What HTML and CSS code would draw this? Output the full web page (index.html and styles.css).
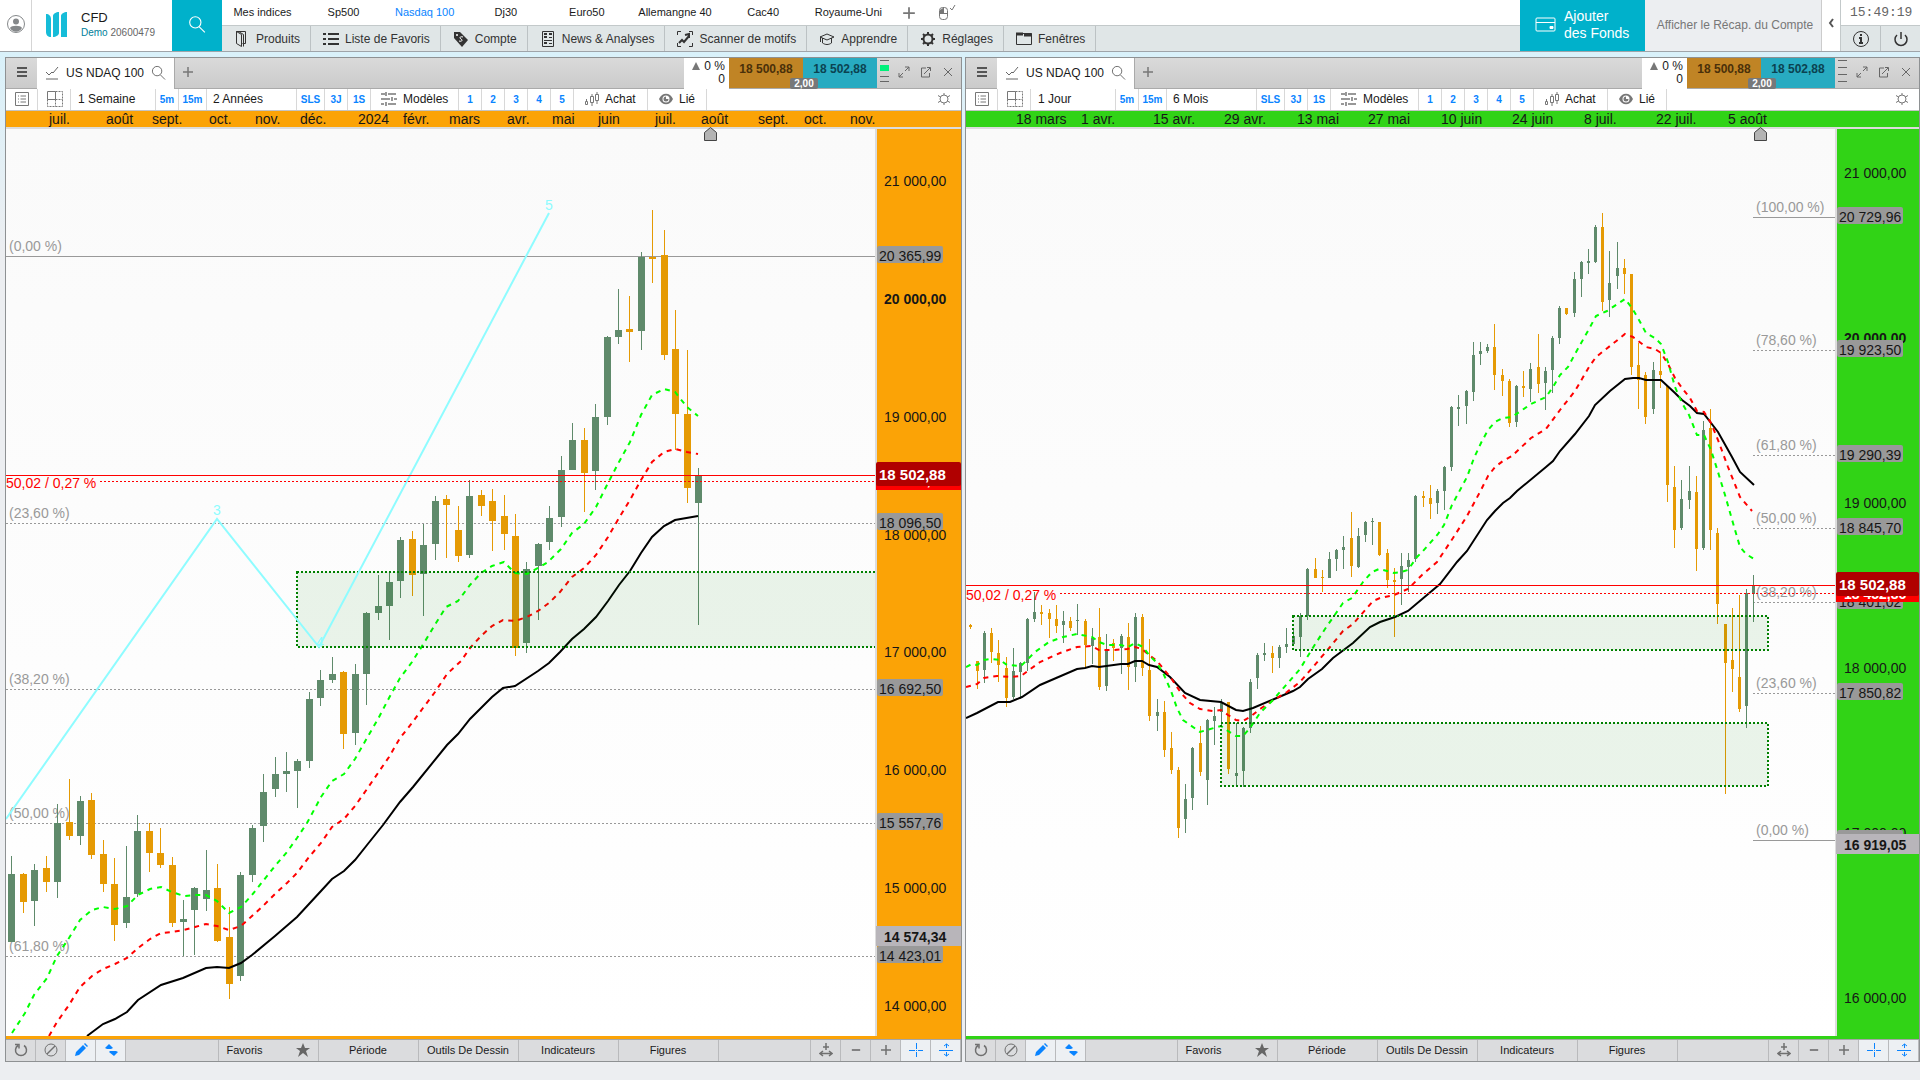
FILE: index.html
```html
<!DOCTYPE html>
<html lang="fr">
<head>
    <meta charset="UTF-8">
    <meta name="viewport" content="width=device-width, initial-scale=1.0">
    <title>CFD - US NDAQ 100</title>
    <link rel="stylesheet" href="styles.css">
</head>
<body>

<!-- icons -->
<svg class="sprite" aria-hidden="true">
    <symbol id="i-search" viewBox="0 0 16 16"><circle cx="6.500" cy="6.500" r="5"/><path d="M10 10.500L15 15.500"/></symbol>
    <symbol id="i-line" viewBox="0 0 14 14"><path d="M1 6l3 3 3-3 1 1 5-6M1 13h12"/></symbol>
    <symbol id="i-list" viewBox="0 0 14 14"><path d="M.5.500h13v13H.5zM3 4h1M3 7h1M3 10h1M5.500 4H11M5.500 7H11M5.500 10H11"/></symbol>
    <symbol id="i-grid" viewBox="0 0 16 16"><path d="M.5.500h8v8h-8z"/><path stroke-dasharray="2 1" d="M8.500.500h7v15H.5v-7M8.500 8.500h7M8.500 8.500v7"/></symbol>
    <symbol id="i-sliders" viewBox="0 0 16 14"><path stroke-width="1.500" d="M0 2h4M7 2h8M0 7h9M13 7h3M0 12h3M7 12h8M5 0v4M11 5v4M5 10v4"/></symbol>
    <symbol id="i-candles" viewBox="0 0 15 14"><path d="M1.500 9.500h2v3h-2zM2.500 7v2M6.500 4.500h3v6h-3zM8 2v2M8 11v3M11.500 2.500h3v6h-3zM13 0v2M13 9v3"/></symbol>
    <symbol id="i-eye" viewBox="0 0 14 12"><path fill="currentColor" stroke="none" d="M0 6c3-7 11-7 14 0-3 7-11 7-14 0z"/><circle cx="7" cy="6" r="3.500" fill="#fff" stroke="none"/><path fill="currentColor" stroke="none" d="M7 3.500v2.500h2.500a2.500 2.500 0 1 1-2.500-2.500z"/></symbol>
    <symbol id="i-cog" viewBox="0 0 14 14"><circle cx="7" cy="7" r="4"/><path d="M7 3V1M7 11v2M3.500 5L1 3.500M3.500 9L1 10.500M10.500 5L13 3.500M10.500 9L13 10.500"/></symbol>
    <symbol id="i-expand" viewBox="0 0 12 12"><path d="M7 5l4-4M7 1h4v4M5 7l-4 4M1 7v4h4"/></symbol>
    <symbol id="i-popout" viewBox="0 0 12 12"><path d="M6 2H1.500v9h8V7M4 8l6-6M7 1.500h3.500V5"/></symbol>
    <symbol id="i-close" viewBox="0 0 12 12"><path d="M2 2l8 8M10 2l-8 8"/></symbol>
    <symbol id="i-plus" viewBox="0 0 12 12"><path stroke-width="1.500" d="M6 1v10M1 6h10"/></symbol>
    <symbol id="i-minus" viewBox="0 0 12 12"><path stroke-width="2" d="M1 6h10"/></symbol>
    <symbol id="i-menu" viewBox="0 0 12 12"><path stroke-width="2" d="M1 2h10M1 6h10M1 10h10"/></symbol>
    <symbol id="i-undo" viewBox="0 0 14 14"><path stroke-width="1.500" d="M4 2.500a5.500 5.500 0 1 0 6 0M1 1.500h4v4"/></symbol>
    <symbol id="i-none" viewBox="0 0 14 14"><circle cx="7" cy="7" r="6"/><path stroke-width="1.500" d="M3 11l8-8"/></symbol>
    <symbol id="i-pen" viewBox="0 0 14 14"><path fill="currentColor" stroke="none" d="M1 13l1-4 7-7 3 3-7 7zM10 1l1-1 3 3-1 1z"/></symbol>
    <symbol id="i-updown" viewBox="0 0 14 14"><path fill="currentColor" stroke="none" d="M1 5l4-4 4 4-2 1H3zM5 9l1-1h6l2 1-4 4z"/></symbol>
    <symbol id="i-star" viewBox="0 0 14 14"><path fill="currentColor" stroke="none" d="M7 0l2 5h5l-4 3 2 6-5-4-5 4 2-6-4-3h5z"/></symbol>
    <symbol id="i-fit" viewBox="0 0 14 14"><path stroke-width="1.500" d="M7 0v7M4 4h6M2 10.500h10M4 8l-3 2.500L4 13M10 8l3 2.500-3 2.500"/></symbol>
    <symbol id="i-cross" viewBox="0 0 14 14"><path d="M7.500 0v6M7.500 9v5M0 7.500h6M9 7.500h5M7 7.500h1"/></symbol>
    <symbol id="i-split" viewBox="0 0 14 14"><path d="M0 7.500h14M7.500 5V1M5 3l2.500-2L10 3M7.500 9v4M5 11l2.500 2 2.500-2"/></symbol>
</svg>

<!-- header -->
<header class="header">
    <button class="avatar" aria-label="Profil">
        <svg width="20" height="20" viewBox="0 0 20 20"><circle cx="10" cy="10" r="8.500"/><path fill="currentColor" stroke="none" d="M10 4.500a3 3 0 0 1 0 6 3 3 0 0 1 0-6zM4 14c1-3 11-3 12 0-3 5-9 5-12 0z"/></svg>
    </button>
    <div class="account">
        <svg class="brand" width="22" height="26" viewBox="0 0 22 26"><path d="M0 2c3 0 5 2 5 5v18c-3 0-5-2-5-5zM7 4c0-2 3-4 6-4v21c0 2-3 4-6 4zM15 4c0-2 3-4 6-4v25h-6z"/></svg>
        <div>
            <div class="account-name">CFD</div>
            <div class="account-id"><span>Demo</span> 20600479</div>
        </div>
    </div>
    <button class="search" aria-label="Rechercher"><svg width="18" height="18"><use href="#i-search"/></svg></button>

    <div class="nav">
        <nav class="tabs">
            <a href="#">Mes indices</a>
            <a href="#">Sp500</a>
            <a href="#" class="active">Nasdaq 100</a>
            <a href="#">Dj30</a>
            <a href="#">Euro50</a>
            <a href="#">Allemangne 40</a>
            <a href="#">Cac40</a>
            <a href="#">Royaume-Uni</a>
            <button aria-label="Ajouter un onglet"><svg width="14" height="14"><use href="#i-plus"/></svg></button>
            <button aria-label="Souris"><svg width="18" height="16" viewBox="0 0 18 16"><rect x="1.500" y="2.500" width="8" height="12" rx="3"/><path d="M1.500 8.500h8M5.500 3v5M12 3l2 2 3-5"/><path fill="currentColor" stroke="none" d="M2 5l3-2v5H2z"/></svg></button>
        </nav>
        <nav class="menu">
            <button><svg width="18" height="16" viewBox="0 0 18 16"><path d="M3.500 12V.5h9v12h-3M3.500.500l5 3v12l-5-3zM5.500.500l5 3v12"/></svg>Produits</button>
            <button><svg width="18" height="16" viewBox="0 0 18 16"><path stroke-width="2" d="M1 3h3M6 3h11M1 8h3M6 8h11M1 13h3M6 13h11"/></svg>Liste de Favoris</button>
            <button><svg width="18" height="16" viewBox="0 0 18 16"><path fill="currentColor" stroke="none" d="M2 1h6l8 8-6 7-8-9z"/><circle cx="5" cy="4" r="1" fill="#fff" stroke="none"/><path stroke="#fff" d="M11 6c-3-1-4 1-2 2s1 3-2 2"/></svg>Compte</button>
            <button><svg width="18" height="16" viewBox="0 0 18 16"><path d="M3.500.500h11v15h-11z"/><path stroke-width="2" d="M5 3h3M5 6h3M10 3h3M5 12h3"/><path d="M10 6.500h3M5 9.500h8M10 12.500h3"/></svg>News &amp; Analyses</button>
            <button><svg width="18" height="16" viewBox="0 0 18 16"><path d="M1.500 4V.5H5M13 .5h3.500V4M1.500 12v3.500H5M13 15.500h3.500V12"/><path stroke-width="2" d="M3 12l3-3 2 2 5-6M9 4l4-1v4"/></svg>Scanner de motifs</button>
            <button><svg width="18" height="16" viewBox="0 0 18 16"><path d="M2 6l7-3 7 3-7 3zM4.500 7v5c3 2 6 2 9 0V7M2.500 6v5"/></svg>Apprendre</button>
            <button><svg width="18" height="16" viewBox="0 0 18 16"><circle cx="9" cy="8" r="4.500" stroke-width="2"/><path stroke-width="2" d="M9 1v2M9 13v2M2 8h2M14 8h2M4 3l2 2M12 11l2 2M14 3l-2 2M6 11l-2 2"/></svg>Réglages</button>
            <button><svg width="18" height="16" viewBox="0 0 18 16"><path d="M1.500 2.500h15v11h-15z"/><path stroke-width="3" d="M1 3h7M9 4h8"/></svg>Fenêtres</button>
        </nav>
    </div>

    <button class="funds">
        <svg width="22" height="16" viewBox="0 0 22 16"><rect x="1" y="1" width="19" height="13" rx="1"/><path d="M1 5.500h19"/><path fill="currentColor" d="M15 9.500h3v2h-3z"/></svg>
        <span>Ajouter<br>des Fonds</span>
    </button>
    <button class="recap">Afficher le Récap. du Compte</button>
    <button class="collapse" aria-label="Replier"><svg width="6" height="10" viewBox="0 0 6 10"><path stroke-width="2" d="M5 1L2 5l3 4"/></svg></button>
    <div class="status">
        <time>15:49:19</time>
        <div class="status-buttons">
            <button aria-label="Informations"><svg width="18" height="18" viewBox="0 0 18 18"><circle cx="9" cy="9" r="7.500"/><path stroke-width="2" d="M9 4v2M7 8h2v5M7 13h4"/></svg></button>
            <button aria-label="Quitter"><svg width="16" height="18" viewBox="0 0 16 18"><path stroke-width="1.500" d="M4 5a6 6 0 1 0 8 0M8 2v7"/></svg></button>
        </div>
    </div>
</header>

<main class="panels">
    <!-- weekly chart -->
    <section class="panel">
        <div class="title-bar">
            <button class="burger" aria-label="Menu"><svg width="12" height="12"><use href="#i-menu"/></svg></button>
            <div class="tab"><svg width="14" height="14"><use href="#i-line"/></svg>US NDAQ 100<svg width="15" height="15"><use href="#i-search"/></svg></div>
            <button class="add-tab" aria-label="Nouveau graphique"><svg width="12" height="12"><use href="#i-plus"/></svg></button>
            <div class="change"><span><i></i>0 %</span><span>0</span></div>
            <div class="quotes">
                <button class="sell">18 500,88</button>
                <button class="buy">18 502,88</button>
                <span class="spread">2,00</span>
            </div>
            <div class="meter on"><i></i><i></i><i></i><i></i></div>
            <div class="window-buttons">
                <button aria-label="Agrandir"><svg width="12" height="12"><use href="#i-expand"/></svg></button>
                <button aria-label="Détacher"><svg width="12" height="12"><use href="#i-popout"/></svg></button>
                <button aria-label="Fermer"><svg width="12" height="12"><use href="#i-close"/></svg></button>
            </div>
        </div>
        <div class="tools">
            <button class="w-list" aria-label="Liste"><svg width="14" height="14"><use href="#i-list"/></svg></button>
            <button class="w-grid" aria-label="Disposition"><svg width="16" height="16"><use href="#i-grid"/></svg></button>
            <button class="w-unit">1 Semaine</button>
            <button class="w-short quick">5m</button>
            <button class="w-mid quick">15m</button>
            <button class="w-range">2 Années</button>
            <button class="w-mid quick">SLS</button>
            <button class="w-short quick">3J</button>
            <button class="w-short quick">1S</button>
            <button class="w-model"><svg width="16" height="14"><use href="#i-sliders"/></svg>Modèles</button>
            <button class="w-short quick">1</button>
            <button class="w-short quick">2</button>
            <button class="w-short quick">3</button>
            <button class="w-short quick">4</button>
            <button class="w-short quick">5</button>
            <button class="w-buy"><svg width="15" height="14"><use href="#i-candles"/></svg>Achat</button>
            <button class="w-link"><svg width="14" height="12"><use href="#i-eye"/></svg>Lié</button>
            <button class="cog" aria-label="Réglages du graphique"><svg width="14" height="14"><use href="#i-cog"/></svg></button>
        </div>
        <svg class="chart" id="weekly" viewBox="6 111 955 928"></svg>
        <div class="bottom-bar">
            <button class="ic" aria-label="Rétablir"><svg width="14" height="14"><use href="#i-undo"/></svg></button>
            <button class="ic" aria-label="Aucun"><svg width="14" height="14"><use href="#i-none"/></svg></button>
            <button class="ic on" aria-label="Dessiner"><svg width="14" height="14"><use href="#i-pen"/></svg></button>
            <button class="ic on" aria-label="Ordre"><svg width="14" height="14"><use href="#i-updown"/></svg></button>
            <span class="space"></span>
            <button class="wide fav">Favoris<svg width="14" height="14"><use href="#i-star"/></svg></button>
            <button class="wide">Période</button>
            <button class="wide">Outils De Dessin</button>
            <button class="wide">Indicateurs</button>
            <button class="wide">Figures</button>
            <span class="space"></span>
            <button class="ic" aria-label="Ajuster"><svg width="14" height="14"><use href="#i-fit"/></svg></button>
            <button class="ic" aria-label="Zoom arrière"><svg width="10" height="10"><use href="#i-minus"/></svg></button>
            <button class="ic" aria-label="Zoom avant"><svg width="12" height="12"><use href="#i-plus"/></svg></button>
            <button class="ic on" aria-label="Réticule"><svg width="14" height="14"><use href="#i-cross"/></svg></button>
            <button class="ic on" aria-label="Échelle"><svg width="14" height="14"><use href="#i-split"/></svg></button>
        </div>
    </section>

    <!-- daily chart -->
    <section class="panel">
        <div class="title-bar">
            <button class="burger" aria-label="Menu"><svg width="12" height="12"><use href="#i-menu"/></svg></button>
            <div class="tab"><svg width="14" height="14"><use href="#i-line"/></svg>US NDAQ 100<svg width="15" height="15"><use href="#i-search"/></svg></div>
            <button class="add-tab" aria-label="Nouveau graphique"><svg width="12" height="12"><use href="#i-plus"/></svg></button>
            <div class="change"><span><i></i>0 %</span><span>0</span></div>
            <div class="quotes">
                <button class="sell">18 500,88</button>
                <button class="buy">18 502,88</button>
                <span class="spread">2,00</span>
            </div>
            <div class="meter"><i></i><i></i><i></i><i></i></div>
            <div class="window-buttons">
                <button aria-label="Agrandir"><svg width="12" height="12"><use href="#i-expand"/></svg></button>
                <button aria-label="Détacher"><svg width="12" height="12"><use href="#i-popout"/></svg></button>
                <button aria-label="Fermer"><svg width="12" height="12"><use href="#i-close"/></svg></button>
            </div>
        </div>
        <div class="tools">
            <button class="w-list" aria-label="Liste"><svg width="14" height="14"><use href="#i-list"/></svg></button>
            <button class="w-grid" aria-label="Disposition"><svg width="16" height="16"><use href="#i-grid"/></svg></button>
            <button class="w-unit">1 Jour</button>
            <button class="w-short quick">5m</button>
            <button class="w-mid quick">15m</button>
            <button class="w-range">6 Mois</button>
            <button class="w-mid quick">SLS</button>
            <button class="w-short quick">3J</button>
            <button class="w-short quick">1S</button>
            <button class="w-model"><svg width="16" height="14"><use href="#i-sliders"/></svg>Modèles</button>
            <button class="w-short quick">1</button>
            <button class="w-short quick">2</button>
            <button class="w-short quick">3</button>
            <button class="w-short quick">4</button>
            <button class="w-short quick">5</button>
            <button class="w-buy"><svg width="15" height="14"><use href="#i-candles"/></svg>Achat</button>
            <button class="w-link"><svg width="14" height="12"><use href="#i-eye"/></svg>Lié</button>
            <button class="cog" aria-label="Réglages du graphique"><svg width="14" height="14"><use href="#i-cog"/></svg></button>
        </div>
        <svg class="chart" id="daily" viewBox="966 111 953 928"></svg>
        <div class="bottom-bar">
            <button class="ic" aria-label="Rétablir"><svg width="14" height="14"><use href="#i-undo"/></svg></button>
            <button class="ic" aria-label="Aucun"><svg width="14" height="14"><use href="#i-none"/></svg></button>
            <button class="ic on" aria-label="Dessiner"><svg width="14" height="14"><use href="#i-pen"/></svg></button>
            <button class="ic on" aria-label="Ordre"><svg width="14" height="14"><use href="#i-updown"/></svg></button>
            <span class="space"></span>
            <button class="wide fav">Favoris<svg width="14" height="14"><use href="#i-star"/></svg></button>
            <button class="wide">Période</button>
            <button class="wide">Outils De Dessin</button>
            <button class="wide">Indicateurs</button>
            <button class="wide">Figures</button>
            <span class="space"></span>
            <button class="ic" aria-label="Ajuster"><svg width="14" height="14"><use href="#i-fit"/></svg></button>
            <button class="ic" aria-label="Zoom arrière"><svg width="10" height="10"><use href="#i-minus"/></svg></button>
            <button class="ic" aria-label="Zoom avant"><svg width="12" height="12"><use href="#i-plus"/></svg></button>
            <button class="ic on" aria-label="Réticule"><svg width="14" height="14"><use href="#i-cross"/></svg></button>
            <button class="ic on" aria-label="Échelle"><svg width="14" height="14"><use href="#i-split"/></svg></button>
        </div>
    </section>
</main>

<script src="script.js"></script>
</body>
</html>
```

FILE: styles.css
```css
*{
    box-sizing: border-box;
    margin:0;
    padding:0;
}
body{
    display: flex;
    flex-direction: column;
    height: 100vh;
    overflow: hidden;
    font-family: "Liberation Sans", Arial, sans-serif;
    font-size: 12px;
    color: #1a1a1a;
    background: #eceef1;
}
button{
    border: 0;
    background: none;
    font: inherit;
    color: inherit;
    white-space: nowrap;
}
a{
    color: inherit;
    text-decoration: none;
}
svg{
    flex: none;
    fill: none;
    stroke: currentColor;
}
.sprite{
    position: absolute;
    width: 0;
    height: 0;
}

/* header */
.header{
    display: flex;
    height: 52px;
    background: #fff;
    border-bottom: 1px solid #9fa4a9;
}
.avatar{
    width: 32px;
    border-right: 1px solid #d5d5d5;
    color: #85888a;
    padding: 0 0 4px 6px;
    display: flex;
    align-items: center;
}
.account{
    display: flex;
    align-items: center;
    width: 140px;
    padding: 0 0 2px 14px;
    gap: 13px;
}
.brand{
    fill: #16bcd8;
    stroke: none;
}
.account-name{
    font-size: 13px;
    line-height: 16px;
}
.account-id{
    font-size: 10px;
    line-height: 14px;
    color: #666;
}
.account-id span{
    color: #00809a;
}
.search{
    display: flex;
    align-items: center;
    justify-content: center;
    width: 50px;
    background: #00b1cb;
    color: #fff;
    padding-bottom: 4px;
}
.nav{
    flex: 1;
    display: flex;
    flex-direction: column;
    min-width: 0;
}
.tabs{
    display: flex;
    height: 25px;
    font-size: 11px;
    line-height: 24px;
}
.tabs a{
    min-width: 81px;
    padding: 0 11px;
    text-align: center;
    white-space: nowrap;
}
.tabs a.active{
    color: #0a84ff;
}
.tabs button{
    display: flex;
    align-items: center;
    width: 36px;
    padding-left: 9px;
    color: #777;
}
.menu{
    flex: 1;
    display: flex;
    background: #e0e6e7;
    border-top: 1px solid #c3c9ca;
}
.menu button{
    display: flex;
    align-items: center;
    gap: 5px;
    padding: 0 10px 0 11px;
    border-right: 1px solid #bcc2c4;
    color: #333;
}
.funds{
    display: flex;
    align-items: center;
    gap: 7px;
    width: 125px;
    padding: 0 0 2px 15px;
    background: #00b1cb;
    color: #fff;
    font-size: 14px;
    line-height: 17px;
    text-align: left;
}
.recap{
    width: 177px;
    padding: 0 0 2px 4px;
    background: #eceef1;
    color: #777;
    border-right: 1px solid #ccc;
}
.collapse{
    width: 19px;
    color: #555;
    border-right: 1px solid #c3c9ca;
    padding-bottom: 4px;
}
.status{
    width: 79px;
    display: flex;
    flex-direction: column;
}
.status time{
    height: 25px;
    padding-left: 9px;
    font-family: "Liberation Mono", monospace;
    font-size: 13px;
    line-height: 26px;
    color: #666;
}
.status-buttons{
    flex: 1;
    display: flex;
    background: #e0e6e7;
    border-top: 1px solid #c3c9ca;
}
.status-buttons button{
    flex: 1;
    display: flex;
    align-items: center;
    justify-content: center;
    color: #333;
}
.status-buttons button + button{
    border-left: 1px solid #bcc2c4;
}

/* panels */
.panels{
    flex: 1;
    min-height: 0;
    display: grid;
    grid-template-columns: 957fr 955fr;
    gap: 3px;
    padding: 5px 0 18px 5px;
    background: linear-gradient(#d9f1fa, #eceef1 200px);
}
.panel{
    display: flex;
    flex-direction: column;
    min-width: 0;
    min-height: 0;
    border: 1px solid #8e9193;
    background: #fff;
}
.title-bar{
    display: flex;
    height: 31px;
    background: linear-gradient(#dadada, #cbcbcb);
    border-bottom: 1px solid #aaa;
}
.burger{
    width: 31px;
    color: #555;
}
.tab{
    display: flex;
    align-items: center;
    width: 138px;
    height: 31px;
    padding: 0 0 2px 8px;
    gap: 7px;
    background: #fff;
    border-right: 1px solid #aaa;
    white-space: nowrap;
}
.tab svg{
    color: #666;
}
.add-tab{
    width: 26px;
    color: #777;
}
.change{
    display: flex;
    flex-direction: column;
    width: 45px;
    height: 31px;
    margin-left: auto;
    padding: 2px 4px 0 0;
    background: #fff;
    text-align: right;
    line-height: 13px;
}
.change i{
    display: inline-block;
    margin-right: 4px;
    border: 4px solid transparent;
    border-top: 0;
    border-bottom: 8px solid #777;
}
.quotes{
    position: relative;
    display: flex;
}
.quotes button{
    width: 74px;
    padding-bottom: 8px;
    font-weight: bold;
    background: #c08425;
    color: #4a300a;
}
.quotes .buy{
    background: #28abc1;
    color: #0b4351;
}
.spread{
    position: absolute;
    bottom: -1px;
    left: 61px;
    width: 28px;
    border-radius: 2px;
    background: #76787a;
    color: #fff;
    font-size: 10px;
    font-weight: bold;
    line-height: 11px;
    text-align: center;
}
.meter{
    display: flex;
    flex-direction: column;
    justify-content: space-between;
    width: 16px;
    padding: 2px 4px 6px 3px;
}
.meter i{
    height: 1px;
    background: #666;
}
.meter.on i:nth-child(2){
    height: 6px;
    background: #00f07a;
}
.window-buttons{
    display: flex;
    padding-right: 2px;
    color: #666;
}
.window-buttons button{
    width: 22px;
}

.tools{
    display: flex;
    height: 22px;
    border-bottom: 1px solid #c4c4c4;
}
.tools button{
    display: flex;
    align-items: center;
    gap: 6px;
    padding-bottom: 2px;
    border-right: 1px solid #d8d8d8;
}
.tools svg{
    color: #777;
}
.tools .quick{
    justify-content: center;
    padding-bottom: 0;
    font-size: 10px;
    font-weight: bold;
    color: #0a84ff;
}
.w-list{
    width: 32px;
    padding-left: 9px;
}
.w-grid{
    width: 33px;
    padding-left: 9px;
}
.w-unit{
    width: 85px;
    padding-left: 7px;
}
.w-range{
    width: 90px;
    padding-left: 6px;
}
.w-short{
    width: 23px;
}
.w-mid{
    width: 28px;
}
.w-model{
    width: 88px;
    padding-left: 10px;
}
.w-buy{
    width: 74px;
    padding-left: 10px;
}
.w-link{
    width: 59px;
    padding-left: 11px;
}
.tools .cog{
    margin-left: auto;
    padding-right: 10px;
    border: 0;
}

.chart{
    display: block;
    flex: 1;
    width: 100%;
    min-height: 0;
    font-size: 14px;
}
.chart text{
    stroke: none;
    fill: #161616;
}
.chart rect{
    stroke: none;
}
.chart .up{
    fill: #5f8a6b;
}
.chart .down{
    fill: #e59a04;
}
.chart .plot{
    fill: url(#fade);
}
.chart .edge{
    fill: #dcdcdc;
}
.chart .ma-fast, .chart .ma-mid{
    stroke: #0f0;
    stroke-width: 2;
    stroke-dasharray: 5 5;
}
.chart .ma-mid{
    stroke: #f00;
}
.chart .ma-slow{
    stroke: #000;
    stroke-width: 2;
}
.chart .fib{
    stroke: #999;
}
.chart .dotted{
    stroke-dasharray: 2 2;
}
.chart .fib-label{
    fill: #999;
}
.chart .zone{
    fill: #00800014;
    stroke: #008000;
    stroke-width: 2;
    stroke-dasharray: 2 2;
}
.chart .wave{
    stroke: #8ffcff;
    stroke-width: 2;
}
.chart .wave-label{
    fill: #8ffcff;
    text-anchor: middle;
}
.chart .last{
    stroke: #f00;
}
.chart .last-label{
    fill: #f00;
}
.chart .badge{
    fill: #999;
}
.chart .badge-wide{
    fill: #b8b5ba;
}
.chart .badge-old{
    fill: #f00;
}
.chart .badge-last{
    fill: #b00000;
}
.chart .bold{
    font-weight: bold;
}
.chart .white{
    fill: #fff;
    font-weight: bold;
}
.chart .big{
    font-size: 15px;
}
.chart .marker{
    fill: #b4b4b4;
    stroke: #444;
}

.bottom-bar{
    display: flex;
    height: 22px;
    border-top: 1px solid #a5a5a5;
    background: #dbdcde;
    font-size: 11px;
}
.bottom-bar button, .space{
    padding-bottom: 2px;
    border-right: 1px solid #b9babc;
}
.ic{
    display: flex;
    align-items: center;
    justify-content: center;
    width: 30px;
    color: #707070;
}
.ic.on{
    background: #edf0f3;
    color: #0a84ff;
}
.space{
    flex: 1;
}
.wide{
    width: 100px;
}
.fav{
    display: flex;
    align-items: center;
    justify-content: space-between;
    padding: 0 8px;
}
.fav svg{
    color: #666;
}
```

FILE: script.js
```js
// candle: [x, high, top, bottom, low, up]
const weekly = {
  color: '#fba306', left: 6, axis: 875, right: 961, body: 3, marker: 704,
  candles: [
    [11,856,874,942,942,1],[23,873,874,902,913,0],[34,864,870,901,926,1],[46,856,868,882,892,0],
    [57,804,823,882,898,1],[69,779,822,836,840,0],[80,796,801,836,845,1],[91,793,800,855,859,0],
    [103,840,854,884,892,0],[114,858,884,925,941,0],[126,846,897,923,928,1],[137,815,831,894,897,1],
    [149,823,831,853,872,0],[160,828,853,865,868,0],[172,857,865,923,927,0],[183,900,919,922,956,1],
    [194,887,888,910,955,1],[206,850,890,899,911,1],[217,864,888,941,942,0],[229,907,937,984,999,0],
    [240,872,875,976,981,1],[252,825,828,875,882,1],[263,774,792,826,842,1],[275,757,774,789,797,1],
    [286,752,771,774,792,1],[297,759,761,771,808,1],[309,692,699,761,768,1],[320,670,680,698,706,1],
    [332,657,674,680,683,1],[343,671,672,734,749,0],[355,664,674,733,745,1],[366,612,613,674,705,1],
    [378,575,606,613,620,1],[389,573,582,606,640,1],[400,537,540,581,598,1],[412,531,539,575,596,0],
    [423,524,545,574,616,1],[435,496,501,544,560,1],[446,495,499,505,558,0],[458,506,530,556,562,0],
    [469,480,496,555,558,1],[481,490,495,506,516,0],[492,489,501,521,551,0],[504,495,516,534,550,0],
    [515,514,536,648,656,0],[526,562,569,643,653,1],[538,543,544,566,620,1],[549,506,518,542,550,1],
    [561,456,470,517,527,1],[572,423,440,470,470,1],[584,428,440,473,512,0],[595,404,417,471,490,1],
    [607,336,337,417,425,1],[618,289,330,337,344,1],[629,296,329,332,362,0],[641,252,257,331,350,1],
    [652,210,257,259,283,0],[664,230,255,355,360,0],[675,310,349,414,450,0],[687,350,414,488,503,0],
    [698,468,475,503,625,1]
  ],
  fast: '12,1033 25,1013 34,995 47,978 57,956 69,938 80,920 92,910 103,907 115,909 127,906 138,895 150,889 161,887 172,892 184,896 195,895 206,895 217,901 229,913 241,907 252,895 263,881 275,866 287,852 297,838 307,823 321,797 332,781 344,774 355,759 367,738 378,719 389,698 400,678 412,662 424,643 436,623 446,607 458,601 470,585 481,573 492,566 504,562 515,573 527,574 538,568 548,562 561,549 572,533 584,524 596,507 608,483 619,462 630,442 641,415 652,395 664,389 675,392 687,407 698,416',
  mid: '49,1036 57,1022 69,1005 80,987 92,976 103,969 115,964 127,958 138,948 150,939 161,933 172,932 184,930 195,927 206,924 217,926 229,930 241,926 252,916 263,906 275,894 287,883 297,873 309,857 321,843 332,827 344,819 355,806 367,789 378,773 389,757 400,738 412,723 423,708 435,692 447,674 461,661 470,648 481,636 492,626 503,620 515,621 527,617 538,611 549,603 560,592 572,577 584,568 596,555 608,537 619,518 630,500 641,480 652,462 664,452 675,449 687,452 698,454',
  slow: '87,1036 103,1024 115,1019 127,1012 138,1000 161,985 183,978 206,968 217,967 229,968 241,963 252,955 275,936 297,917 321,891 332,879 344,871 355,860 367,845 383,825 400,802 413,787 447,745 458,734 470,719 480,709 492,697 503,688 515,686 538,671 549,663 560,652 572,639 584,629 596,617 608,601 619,585 630,571 641,553 652,537 664,526 675,520 698,516',
  fibX: 6,
  // y, label, solid
  fibs: [[256,'(0,00 %)',1],[523,'(23,60 %)'],[689,'(38,20 %)'],[823,'(50,00 %)'],[956,'(61,80 %)']],
  // x, y, width, height
  zones: [[297,572,600,75]],
  wave: '6,819 217,519 319,647 549,213',
  waveLabels: [[217,515,'3'],[320,647,'4'],[549,210,'5']],
  last: 475, old: 481, oldBadge: 470, oldText: 485,
  dates: [[49,'juil.'],[106,'août'],[152,'sept.'],[209,'oct.'],[255,'nov.'],[300,'déc.'],[358,'2024'],[403,'févr.'],[449,'mars'],[507,'avr.'],[552,'mai'],[598,'juin'],[655,'juil.'],[701,'août'],[758,'sept.'],[804,'oct.'],[850,'nov.']],
  prices: [[181,'21 000,00'],[299,'20 000,00',1],[417,'19 000,00'],[535,'18 000,00'],[652,'17 000,00'],[770,'16 000,00'],[888,'15 000,00'],[1006,'14 000,00']],
  badges: [[256,'20 365,99'],[523,'18 096,50'],[689,'16 692,50'],[823,'15 557,76'],[956,'14 423,01']],
  wide: [937,'14 574,34']
};

const daily = {
  color: '#31d316', left: 966, axis: 1835, right: 1919, body: 1, marker: 1754,
  candles: [
    [970,624,625,627,629,0],[977,661,661,671,689,0],[984,631,633,670,683,1],[991,628,633,652,663,0],
    [998,640,653,665,682,0],[1006,657,668,698,707,0],[1013,648,671,697,699,1],[1020,662,663,672,699,1],
    [1027,618,619,663,671,1],[1034,592,612,619,622,1],[1041,605,612,614,625,0],[1049,609,613,619,638,0],
    [1056,605,619,626,633,0],[1063,611,621,625,643,1],[1070,617,621,628,631,0],[1077,604,620,621,635,1],
    [1085,619,621,645,668,0],[1092,628,638,646,664,1],[1099,608,637,687,690,0],[1106,634,649,686,691,1],
    [1113,639,643,648,661,0],[1121,634,636,648,674,1],[1128,623,637,667,690,0],[1135,613,617,667,682,1],
    [1142,614,617,668,676,0],[1149,639,670,716,721,0],[1157,699,712,716,731,1],[1164,701,712,750,757,0],
    [1171,732,748,770,774,0],[1178,767,770,828,838,0],[1185,784,799,819,833,1],[1192,747,748,798,810,1],
    [1200,726,743,772,776,0],[1207,719,720,780,805,1],[1214,707,716,721,745,1],[1221,699,703,712,725,1],
    [1228,702,702,769,774,0],[1236,723,773,776,786,1],[1243,727,728,771,787,1],[1250,679,682,728,733,1],
    [1257,653,655,678,689,1],[1264,643,653,655,661,1],[1272,646,653,658,673,0],[1279,645,647,658,668,1],
    [1286,628,644,647,653,1],[1293,629,636,644,644,1],[1300,613,616,637,657,1],[1307,568,569,616,620,1],
    [1315,558,569,578,578,0],[1322,570,577,578,592,0],[1329,552,559,578,578,1],[1336,549,550,559,571,1],
    [1343,536,547,550,569,1],[1351,512,538,566,577,0],[1358,528,536,567,568,1],[1365,521,522,535,542,1],
    [1372,518,521,522,545,1],[1379,522,522,555,556,0],[1387,549,553,580,588,0],[1394,568,580,582,637,0],
    [1401,553,566,579,605,1],[1408,553,560,567,592,1],[1415,495,496,559,562,1],[1423,491,496,498,507,0],
    [1430,485,498,504,519,0],[1437,489,491,503,514,1],[1444,466,467,491,510,1],[1451,406,407,467,471,1],
    [1458,395,407,409,426,1],[1466,390,391,406,424,1],[1473,342,355,392,401,1],[1480,342,351,354,365,1],
    [1487,344,347,351,353,1],[1494,324,347,375,390,0],[1502,369,375,381,396,0],[1509,379,381,423,427,0],
    [1516,385,386,422,427,1],[1523,371,386,388,397,0],[1530,363,369,389,402,1],[1538,334,367,384,393,0],
    [1545,367,371,383,410,1],[1552,336,338,370,393,1],[1559,306,308,338,344,1],[1566,308,308,314,315,0],
    [1574,272,279,313,317,1],[1581,261,262,279,297,1],[1588,249,261,263,274,1],[1595,225,227,262,263,1],
    [1602,213,227,302,311,0],[1609,251,283,300,317,1],[1617,242,268,276,289,1],[1624,259,268,274,294,0],
    [1631,274,274,367,375,0],[1638,343,365,380,409,0],[1645,372,375,417,424,0],[1653,362,370,409,414,1],
    [1660,352,371,375,388,0],[1667,385,386,485,502,0],[1674,466,487,530,548,0],[1681,480,499,528,530,1],
    [1689,466,491,500,509,1],[1696,476,492,549,571,0],[1703,421,430,548,550,1],[1710,409,428,530,550,0],
    [1717,528,533,604,624,0],[1725,624,624,663,794,0],[1732,608,660,669,692,0],[1739,595,677,709,712,0],
    [1746,589,593,706,728,1],[1753,575,586,594,622,1]
  ],
  fast: '966,667 972,664 977,665 984,660 991,659 1000,660 1007,665 1021,666 1035,652 1049,642 1063,637 1077,634 1092,637 1099,642 1107,645 1121,645 1128,647 1135,643 1143,647 1149,655 1157,663 1164,675 1171,691 1177,708 1183,720 1190,725 1200,732 1207,730 1221,726 1228,731 1236,736 1243,736 1250,728 1260,713 1272,701 1287,684 1300,669 1314,646 1325,629 1343,603 1352,598 1363,582 1372,572 1379,569 1387,571 1394,573 1401,572 1408,570 1417,557 1423,551 1438,534 1444,525 1452,505 1467,477 1474,458 1481,443 1488,430 1495,422 1503,418 1512,417 1531,404 1546,397 1553,387 1560,375 1568,367 1575,354 1589,329 1596,316 1607,311 1625,299 1632,308 1639,320 1646,333 1655,338 1661,344 1668,362 1675,387 1682,403 1689,415 1697,435 1704,435 1711,450 1718,472 1725,495 1733,523 1740,547 1746,554 1754,559',
  mid: '966,687 977,684 984,678 997,676 1010,677 1021,676 1040,662 1060,653 1077,647 1092,646 1099,650 1113,650 1127,649 1135,647 1142,649 1149,655 1157,661 1171,678 1181,693 1190,703 1200,709 1213,711 1221,710 1228,715 1236,720 1243,721 1250,717 1260,709 1272,701 1287,692 1300,682 1313,667 1330,647 1343,631 1353,624 1367,608 1373,601 1380,598 1394,595 1408,589 1422,575 1437,562 1443,553 1453,538 1467,516 1481,490 1488,476 1495,467 1503,461 1512,456 1531,438 1546,429 1560,410 1575,391 1589,367 1596,357 1610,346 1625,334 1633,337 1646,347 1655,349 1661,353 1668,364 1675,378 1682,388 1690,398 1697,411 1704,412 1711,423 1718,440 1728,467 1740,497 1752,511',
  slow: '966,718 977,713 998,702 1010,702 1022,697 1040,685 1077,669 1085,668 1092,666 1099,667 1121,664 1128,664 1135,661 1142,661 1149,665 1157,667 1170,677 1185,693 1200,700 1221,702 1236,710 1243,711 1253,708 1272,700 1293,691 1300,687 1308,679 1322,669 1333,658 1353,643 1370,627 1380,622 1395,617 1408,611 1440,584 1457,562 1467,551 1487,520 1495,511 1503,503 1510,498 1517,491 1546,467 1553,461 1560,451 1575,434 1589,416 1595,405 1610,391 1625,379 1633,378 1639,378 1646,380 1661,380 1675,393 1682,400 1690,406 1697,413 1704,414 1718,432 1732,457 1740,472 1754,485',
  fibX: 1753,
  fibs: [[217,'(100,00 %)',1],[350,'(78,60 %)'],[455,'(61,80 %)'],[528,'(50,00 %)'],[602,'(38,20 %)'],[693,'(23,60 %)'],[840,'(0,00 %)',1]],
  zones: [[1293,616,475,34],[1221,723,547,63]],
  wave: '',
  waveLabels: [],
  last: 585, old: 593, oldBadge: 582, oldText: 599,
  dates: [[1016,'18 mars'],[1081,'1 avr.'],[1153,'15 avr.'],[1224,'29 avr.'],[1297,'13 mai'],[1368,'27 mai'],[1441,'10 juin'],[1512,'24 juin'],[1584,'8 juil.'],[1656,'22 juil.'],[1728,'5 août']],
  prices: [[173,'21 000,00'],[338,'20 000,00',1],[503,'19 000,00'],[668,'18 000,00'],[833,'17 000,00'],[998,'16 000,00']],
  badges: [[217,'20 729,96'],[350,'19 923,50'],[455,'19 290,39'],[528,'18 845,70'],[602,'18 401,02'],[693,'17 850,82'],[840,'16 924,00']],
  wide: [845,'16 919,05']
};

const rect = (x, y, w, h, cls, more = '') => `<rect x="${x}" y="${y}" width="${w}" height="${h}" class="${cls}" ${more}/>`;
const line = (x1, x2, y, cls) => `<path d="M${x1} ${y + 0.5}H${x2}" class="${cls}"/>`;
const text = (x, y, str, cls = '') => `<text x="${x}" y="${y}" class="${cls}">${str}</text>`;
const poly = (points, cls) => `<polyline points="${points}" class="${cls}"/>`;

function draw(id, c) {
  const clip = id + '-clip';
  const w = c.axis - c.left;
  let out = `<defs>
    <linearGradient id="fade" x2="0" y2="1"><stop stop-color="#fafafa"/><stop offset="1" stop-color="#fff"/></linearGradient>
    <clipPath id="${clip}"><rect x="${c.left}" y="129" width="${w}" height="907"/></clipPath>
  </defs>`;

  // background, date strip and price axis
  out += rect(c.left, 111, c.right - c.left, 928, '', `fill="${c.color}"`);
  out += rect(c.left, 127, c.right - c.left, 2, 'edge');
  out += rect(c.left, 129, w, 907, 'plot');
  out += rect(c.axis, 129, 2, 907, 'edge');
  c.dates.forEach(([x, s]) => out += text(x, 124, s));

  out += `<g clip-path="url(#${clip})">`;
  c.fibs.forEach(([y, s, solid]) => {
    out += line(c.fibX, c.axis, y, solid ? 'fib' : 'fib dotted');
    out += text(c.fibX + 3, y - 5, s, 'fib-label');
  });
  c.candles.forEach(([x, high, top, bottom, low, up]) => {
    const cls = up ? 'up' : 'down';
    out += rect(x, high, 1, low - high, cls);
    out += rect(x - c.body, top, c.body * 2 + 1, bottom - top, cls);
  });
  out += poly(c.slow, 'ma-slow') + poly(c.mid, 'ma-mid') + poly(c.fast, 'ma-fast');
  c.zones.forEach(([x, y, zw, zh]) => out += `<path d="M${x} ${y}h${zw}v${zh}h-${zw}z" class="zone"/>`);
  out += poly(c.wave, 'wave');
  c.waveLabels.forEach(([x, y, s]) => out += text(x, y, s, 'wave-label'));
  out += line(c.left, c.axis, c.last, 'last');
  out += line(c.left + 94, c.axis, c.old, 'last dotted');
  out += text(c.left, c.old + 7, '50,02 / 0,27 %', 'last-label');
  out += '</g>';

  // price labels
  c.prices.forEach(([y, s, bold]) => out += text(c.axis + 9, y + 5, s, bold ? 'bold' : ''));
  c.badges.forEach(([y, s]) => {
    out += rect(c.axis + 2, y - 10, 66, 17, 'badge', 'rx="2"');
    out += text(c.axis + 4, y + 5, s);
  });
  out += rect(c.axis + 1, c.wide[0] - 11, c.right - c.axis - 1, 20, 'badge-wide');
  out += text(c.axis + 9, c.wide[0] + 5, c.wide[1], 'bold');
  out += rect(c.axis + 1, c.oldBadge, c.right - c.axis - 1, 20, 'badge-old');
  out += text(c.axis + 9, c.oldText, '18 452,86', 'white');
  out += rect(c.axis + 1, c.last - 13, c.right - c.axis - 1, 24, 'badge-last', 'rx="2"');
  out += text(c.axis + 4, c.last + 5, '18 502,88', 'white big');

  out += `<path d="M${c.marker}.5 140.500v-8l6-5 6 5v8z" class="marker"/>`;
  document.getElementById(id).innerHTML = out;
}

draw('weekly', weekly);
draw('daily', daily);
```
